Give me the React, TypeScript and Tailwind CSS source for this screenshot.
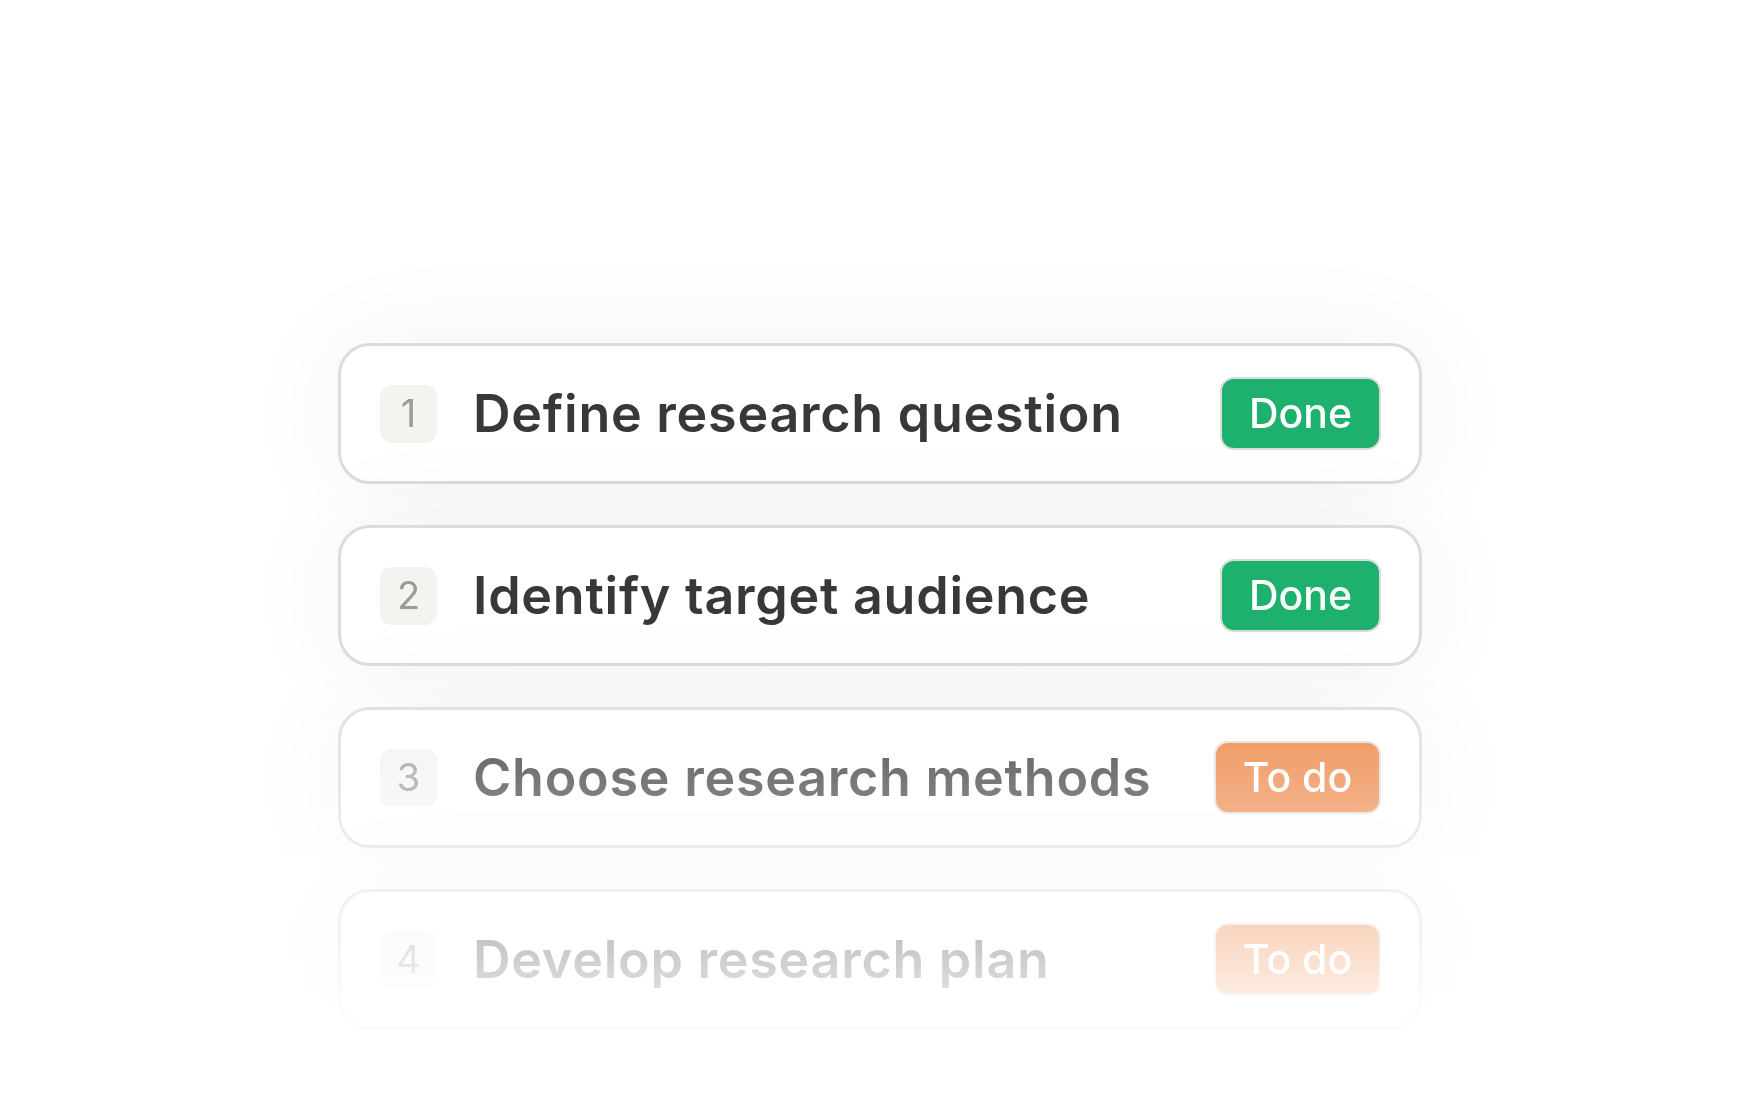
const steps = [
  { n: 1, title: "Define research question", done: true },
  { n: 2, title: "Identify target audience", done: true },
  { n: 3, title: "Choose research methods", done: false },
  { n: 4, title: "Develop research plan", done: false },
];

const StepCard = ({ n, title, done }: { n: number; title: string; done: boolean }) => {
  return (
    <div className="flex h-[141px] w-[1084px] items-center rounded-[32px] border-[3px] border-[#dcdcdc] bg-white pl-[39px] pr-[38px] shadow-[0_0_110px_rgba(0,0,0,0.055)]">
      <div className="flex h-[58px] w-[57px] items-center justify-center rounded-[12px] bg-[#f4f3f0] text-[38px] font-normal text-[#9a9a9a]">
        {n}
      </div>
      <h3 className="ml-[36px] text-[52px] font-semibold tracking-[0.75px] text-[#383838]">
        {title}
      </h3>
      {done ? (
        <span className="ml-auto flex h-[73px] w-[161px] items-center justify-center rounded-[14px] border-2 border-[#d9dcd9] bg-[#1eb16d] text-[41px] font-medium text-white">
          Done
        </span>
      ) : (
        <span className="ml-auto flex h-[73px] w-[167px] items-center justify-center rounded-[14px] border-2 border-[#e2dcd8] bg-[#ec803c] text-[41px] font-medium text-white">
          To do
        </span>
      )}
    </div>
  );
};

export default function App() {
  return (
    <div className="h-[1120px] w-full overflow-hidden bg-white font-['Inter',sans-serif]">
      <div className="flex h-full flex-col items-center gap-[41px] pt-[343px] [mask-image:linear-gradient(to_bottom,black_650px,transparent_1060px)]">
        {steps.map((s) => (
          <StepCard key={s.n} {...s} />
        ))}
      </div>
    </div>
  );
}
